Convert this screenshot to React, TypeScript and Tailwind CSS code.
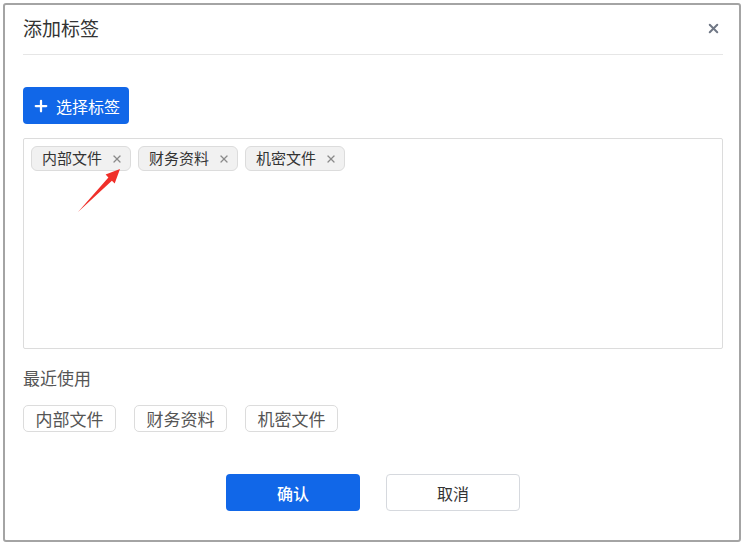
import React from 'react';
import { X, Plus } from 'lucide-react';

const TAGS = ['内部文件', '财务资料', '机密文件'];

const App: React.FC = () => {
  return (
    <div className="w-[745px] h-[545px] bg-white p-[3px] font-['Noto_Sans_CJK_SC',sans-serif]">
      <div className="w-[738px] h-[539px] border-2 border-[#a4a4a4] rounded-[3px] bg-white pl-[18px] pr-[16px] flex flex-col">
        {/* Header */}
        <div className="flex items-center justify-between pt-[9px] pb-[12px] border-b border-[#e6e6e6]">
          <h2 className="text-[19px] leading-[28px] text-[#333]">添加标签</h2>
          <X className="w-[15px] h-[15px] text-[#6f7785] mr-[2px]" strokeWidth={3.2} />
        </div>

        <div className="mt-[32px]">
          <button className="h-[37px] w-[106px] rounded-[4px] bg-[#1167e8] text-white text-[16px] flex items-center justify-center gap-[6px]">
            <Plus className="w-[18px] h-[18px]" strokeWidth={3} />
            选择标签
          </button>
        </div>

        {/* Selected tags box */}
        <div className="relative mt-[14px] h-[211px] border border-[#dcdcdc] rounded-[2px] p-[7px] flex items-start gap-[7px]">
          {TAGS.map((t) => (
            <span
              key={t}
              className="h-[25px] w-[100px] pl-[10px] pr-[7px] flex items-center justify-between bg-[#f1f1f1] border border-[#dcdcdc] rounded-[6px] text-[15px] text-[#333]"
            >
              {t}
              <X className="w-[12px] h-[12px] text-[#8a8a8a]" strokeWidth={2.5} />
            </span>
          ))}
          <svg className="absolute left-0 top-0 pointer-events-none" width="120" height="90" viewBox="0 0 120 90">
            <polygon
              points="54,73 84.4,38.4 81.6,35.6 96,30 90.7,44.5 87.9,41.7"
              fill="#f0302a"
            />
          </svg>
        </div>

        <div className="mt-[17px] text-[17px] leading-6 text-[#555]">最近使用</div>

        <div className="mt-[15px] flex gap-[18px]">
          {TAGS.map((t) => (
            <span
              key={t}
              className="h-[27px] w-[93px] flex items-center justify-center border border-[#dcdcdc] rounded-[5px] text-[17px] text-[#555] bg-white"
            >
              {t}
            </span>
          ))}
        </div>

        <div className="mt-[42px] flex justify-center gap-[26px]">
          <button className="h-[37px] w-[134px] rounded-[4px] bg-[#1167e8] text-white text-[16px] font-medium">确认</button>
          <button className="h-[37px] w-[134px] rounded-[4px] bg-white border border-[#d6d9de] text-[#333] text-[16px]">取消</button>
        </div>
      </div>
    </div>
  );
};

export default App;
